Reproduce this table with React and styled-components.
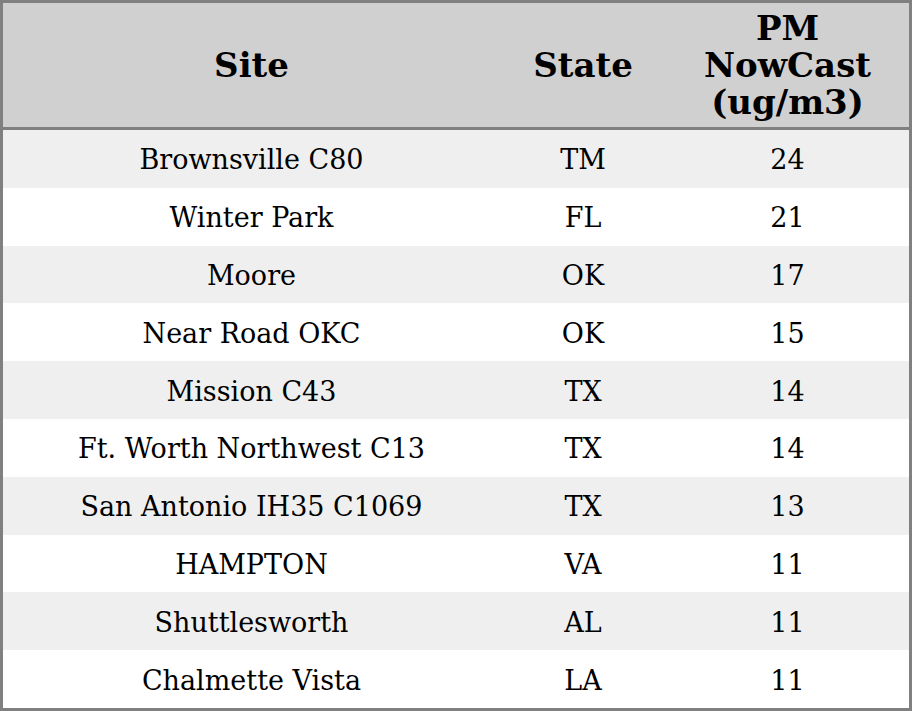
import React from "react";
import styled, { createGlobalStyle } from "styled-components";

const GlobalStyle = createGlobalStyle`
  html, body {
    margin: 0;
    padding: 0;
    background: #ffffff;
  }
`;

const rows = [
  { site: "Brownsville C80", state: "TM", value: 24 },
  { site: "Winter Park", state: "FL", value: 21 },
  { site: "Moore", state: "OK", value: 17 },
  { site: "Near Road OKC", state: "OK", value: 15 },
  { site: "Mission C43", state: "TX", value: 14 },
  { site: "Ft. Worth Northwest C13", state: "TX", value: 14 },
  { site: "San Antonio IH35 C1069", state: "TX", value: 13 },
  { site: "HAMPTON", state: "VA", value: 11 },
  { site: "Shuttlesworth", state: "AL", value: 11 },
  { site: "Chalmette Vista", state: "LA", value: 11 },
];

export default function App() {
  return (
    <>
      <GlobalStyle />
      <Table>
        <colgroup>
          <col style={{ width: 497 }} />
          <col style={{ width: 166 }} />
          <col style={{ width: 243 }} />
        </colgroup>
        <thead>
          <tr>
            <HeadCell>Site</HeadCell>
            <HeadCell>State</HeadCell>
            <HeadCell>
              PM
              <br />
              NowCast
              <br />
              (ug/m3)
            </HeadCell>
          </tr>
        </thead>
        <tbody>
          {rows.map((row, index) => (
            <Row key={index} $shaded={index % 2 === 0}>
              <Cell>{row.site}</Cell>
              <Cell>{row.state}</Cell>
              <Cell>{row.value}</Cell>
            </Row>
          ))}
        </tbody>
      </Table>
    </>
  );
}

const Table = styled.table`
  width: 912px;
  border-collapse: separate;
  border-spacing: 0;
  border: 3px solid #808080;
  table-layout: fixed;
  font-family: "DejaVu Serif", serif;
  color: #000000;
`;

const HeadCell = styled.th`
  height: 123px;
  padding: 1px 0 0;
  background: #d0d0d0;
  border-bottom: 3px solid #808080;
  font-size: 34px;
  font-weight: bold;
  line-height: 37px;
  text-align: center;
  vertical-align: middle;
`;

const Row = styled.tr`
  background: ${(props) => (props.$shaded ? "#efefef" : "#ffffff")};
`;

const Cell = styled.td`
  height: 55.8px;
  padding: 2px 0 0;
  font-size: 27px;
  text-align: center;
  vertical-align: middle;
`;
